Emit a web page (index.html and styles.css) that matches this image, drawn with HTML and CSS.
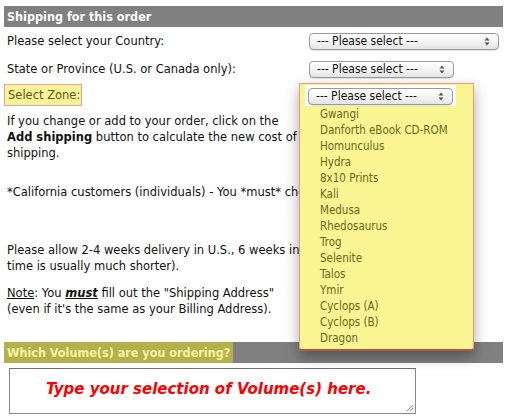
FILE: index.html
```html
<!DOCTYPE html>
<html>
<head>
<meta charset="utf-8">
<link rel="stylesheet" href="styles.css">
</head>
<body>
<div class="page">
  <div class="bar">Shipping for this order</div>

  <div class="row row-country">
    <span class="label">Please select your Country:</span>
    <div class="select wide"><span>--- Please select ---</span><svg class="arr" width="6" height="9" viewBox="0 0 6 9"><path d="M0.5 3.5 L3 0.5 L5.5 3.5 Z M0.5 5.5 L3 8.5 L5.5 5.5 Z" fill="#555"/></svg></div>
  </div>

  <div class="row row-state">
    <span class="label">State or Province (U.S. or Canada only):</span>
    <div class="select"><span>--- Please select ---</span><svg class="arr" width="6" height="9" viewBox="0 0 6 9"><path d="M0.5 3.5 L3 0.5 L5.5 3.5 Z M0.5 5.5 L3 8.5 L5.5 5.5 Z" fill="#555"/></svg></div>
  </div>

  <div class="row row-zone">
    <span class="zone-label">Select Zone:</span>
    <div class="zone-wrap">
      <div class="popup">
        <ul class="options">
          <li>Gwangi</li>
          <li>Danforth eBook CD-ROM</li>
          <li>Homunculus</li>
          <li>Hydra</li>
          <li>8x10 Prints</li>
          <li>Kali</li>
          <li>Medusa</li>
          <li>Rhedosaurus</li>
          <li>Trog</li>
          <li>Selenite</li>
          <li>Talos</li>
          <li>Ymir</li>
          <li>Cyclops (A)</li>
          <li>Cyclops (B)</li>
          <li>Dragon</li>
        </ul>
      </div>
      <div class="select-hl">
        <div class="select"><span>--- Please select ---</span><svg class="arr" width="6" height="9" viewBox="0 0 6 9"><path d="M0.5 3.5 L3 0.5 L5.5 3.5 Z M0.5 5.5 L3 8.5 L5.5 5.5 Z" fill="#555"/></svg></div>
      </div>
    </div>
  </div>

  <p class="para p1">If you change or add to your order, click on the<br><b>Add shipping</b> button to calculate the new cost of<br>shipping.</p>

  <p class="para p2">*California customers (individuals) - You *must* check</p>

  <p class="para p3">Please allow 2-4 weeks delivery in U.S., 6 weeks int'l<br>time is usually much shorter).</p>

  <p class="para p4"><u>Note</u>: You <u><b><i>must</i></b></u> fill out the "Shipping Address"<br>(even if it's the same as your Billing Address).</p>

  <div class="bar bar2"><span class="bar2-label">Which Volume(s) are you ordering?</span></div>

  <div class="textarea">
    <span class="ta-text">Type your selection of Volume(s) here.</span>
    <svg class="grip" width="9" height="9" viewBox="0 0 9 9"><path d="M8 2 L2 8 M8 5 L5 8" stroke="#888" stroke-width="1"/></svg>
  </div>
</div>
</body>
</html>
```

FILE: styles.css
```css
html, body {
  margin: 0;
  padding: 0;
  background: #fff;
}

.page {
  width: 499px;
  margin-left: 4px;
  font-family: "DejaVu Sans", Verdana, sans-serif;
  font-size: 11.5px;
  color: #111;
}

.bar {
  margin-top: 6px;
  height: 21px;
  line-height: 21px;
  background: #808080;
  color: #fff;
  font-family: "DejaVu Sans Condensed", "DejaVu Sans", sans-serif;
  font-weight: bold;
  font-size: 12.5px;
  padding-left: 3px;
  white-space: nowrap;
}

.row {
  display: flex;
  align-items: center;
  justify-content: space-between;
  padding-left: 3px;
}

.row-country {
  height: 28px;
}

.row-state {
  height: 28px;
}

.label {
  line-height: 16px;
}

.select {
  position: relative;
  box-sizing: border-box;
  width: 145px;
  height: 17px;
  border: 1px solid #9a9a9a;
  border-radius: 4px;
  background: linear-gradient(#ffffff, #f2f2f2 60%, #e4e4e4);
  font-family: "DejaVu Sans Condensed", "DejaVu Sans", sans-serif;
  font-size: 12px;
  line-height: 15px;
  padding-left: 7px;
  color: #111;
  box-shadow: 0 1px 1px rgba(0,0,0,0.12);
}

.select.wide {
  width: 190px;
  margin-right: 4px;
}

.row-state .select {
  margin-right: 49px;
}

.arr {
  position: absolute;
  right: 8px;
  top: 3px;
}

.row-zone {
  height: 22px;
  margin-top: 1px;
  padding-left: 0;
  align-items: flex-start;
}

.zone-label {
  box-sizing: border-box;
  height: 22px;
  width: 78px;
  line-height: 20px;
  padding: 0 0 0 3px;
  background: #f8f49c;
  border: 1px solid #f2a090;
  color: #5c5a10;
}

.zone-wrap {
  position: relative;
  width: 204px;
  height: 22px;
}

.popup {
  position: absolute;
  left: 0;
  top: -1px;
  width: 175px;
  height: 268px;
  box-sizing: border-box;
  background: #f8f592;
  border: 1px solid #f19584;
  border-bottom: 2px solid #b45a3a;
  border-radius: 0 0 4px 4px;
  box-shadow: 0 6px 14px rgba(0,0,0,0.35);
  z-index: 5;
}

.options {
  list-style: none;
  margin: 0;
  padding: 22px 0 0 20px;
  font-family: "DejaVu Sans Condensed", "DejaVu Sans", sans-serif;
  font-size: 11.5px;
  color: #6a681c;
}

.options li {
  height: 16px;
  line-height: 16px;
}

.select-hl {
  position: absolute;
  left: 6px;
  top: 1px;
  width: 151px;
  height: 21px;
  background: #fff;
  z-index: 6;
  box-sizing: border-box;
  padding: 3px 0 0 3px;
}

.para {
  margin: 0;
  padding-left: 3px;
  line-height: 16px;
  white-space: nowrap;
}

.p1 { margin-top: 7px; }
.p2 { margin-top: 23px; }
.p3 { margin-top: 42px; }
.p4 { margin-top: 11px; }

.bar2 {
  margin-top: 25px;
  height: 21px;
  padding-left: 0;
}

.bar2-label {
  display: inline-block;
  height: 21px;
  width: 226px;
  padding-left: 3px;
  background: #b4b14c;
  color: #f6f3a4;
}

.textarea {
  position: relative;
  box-sizing: border-box;
  margin-top: 5px;
  margin-left: 5px;
  width: 407px;
  height: 46px;
  border: 1px solid #8a8a8a;
  border-top-color: #707070;
  background: #fff;
}

.ta-text {
  position: absolute;
  left: 36px;
  top: 11px;
  font-family: "DejaVu Sans", Verdana, sans-serif;
  font-weight: bold;
  font-style: italic;
  font-size: 15px;
  color: #f00;
  white-space: nowrap;
}

.grip {
  position: absolute;
  right: 1px;
  bottom: 1px;
}
```
